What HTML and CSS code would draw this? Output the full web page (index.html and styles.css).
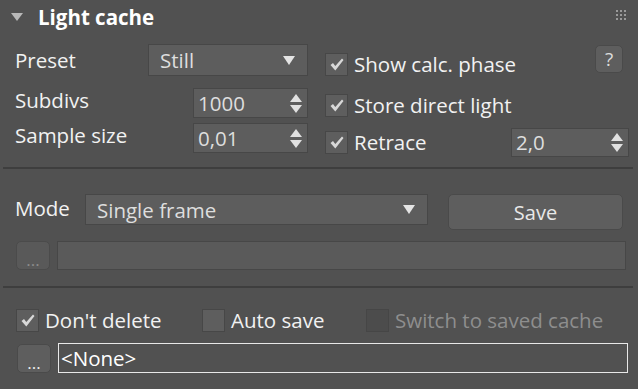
FILE: index.html
```html
<!doctype html>
<html lang="en">
  <head>
    <meta charset="UTF-8" />
    <title>Light cache</title>
    <link rel="stylesheet" href="styles.css">
  </head>
  <body>
    <div class="panel">
      <div class="header">
        <span class="collapse"></span>
        <span class="title">Light cache</span>
        <span class="grip">
          <i></i><i></i><i></i><i></i><i></i><i></i><i></i><i></i><i></i>
        </span>
      </div>

      <div class="top">
        <div class="left">
          <div class="row row-preset">
            <span class="label">Preset</span>
            <div class="dropdown preset-dd">
              <span>Still</span>
              <span class="arrow"></span>
            </div>
          </div>
          <div class="row row-subdivs">
            <span class="label">Subdivs</span>
            <div class="spinner">
              <span>1000</span>
              <span class="spin"><b class="up"></b><b class="down"></b></span>
            </div>
          </div>
          <div class="row row-sample">
            <span class="label">Sample size</span>
            <div class="spinner">
              <span>0,01</span>
              <span class="spin"><b class="up"></b><b class="down"></b></span>
            </div>
          </div>
        </div>

        <div class="right">
          <div class="row row-show">
            <label class="check"><span class="box on"></span>Show calc. phase</label>
            <button class="help">?</button>
          </div>
          <div class="row row-store">
            <label class="check"><span class="box on"></span>Store direct light</label>
          </div>
          <div class="row row-retrace">
            <label class="check"><span class="box on"></span>Retrace</label>
            <div class="spinner retrace-spin">
              <span>2,0</span>
              <span class="spin"><b class="up"></b><b class="down"></b></span>
            </div>
          </div>
        </div>
      </div>

      <div class="sep"></div>

      <div class="mode">
        <div class="row row-mode">
          <span class="label">Mode</span>
          <div class="dropdown mode-dd">
            <span>Single frame</span>
            <span class="arrow"></span>
          </div>
          <button class="save">Save</button>
        </div>
        <div class="row row-path">
          <button class="dots disabled">...</button>
          <div class="field"></div>
        </div>
      </div>

      <div class="sep"></div>

      <div class="bottom">
        <div class="row row-opts">
          <label class="check dont"><span class="box on"></span>Don't delete</label>
          <label class="check auto"><span class="box"></span>Auto save</label>
          <label class="check switch disabled"><span class="box"></span>Switch to saved cache</label>
        </div>
        <div class="row row-file">
          <button class="dots">...</button>
          <div class="field file">&lt;None&gt;</div>
        </div>
      </div>
    </div>
  </body>
</html>
```

FILE: styles.css
```css
* {
  margin: 0;
  padding: 0;
  box-sizing: border-box;
}

body {
  background: #515151;
  font-family: 'Open Sans', 'Noto Sans', sans-serif;
  font-size: 20.5px;
  color: #f2f2f2;
  width: 638px;
  height: 389px;
  overflow: hidden;
}

.panel {
  width: 638px;
}

.row {
  display: flex;
  align-items: center;
}

/* header */
.header {
  height: 34px;
  display: flex;
  align-items: center;
  position: relative;
}

.collapse {
  width: 0;
  height: 0;
  margin-left: 11px;
  border-left: 6px solid transparent;
  border-right: 6px solid transparent;
  border-top: 8px solid #b8b8b8;
}

.title {
  margin-left: 15px;
  font-weight: 700;
  font-size: 20.5px;
  color: #ffffff;
}

.grip {
  position: absolute;
  right: 12px;
  top: 10px;
  display: grid;
  grid-template-columns: repeat(3, 2px);
  gap: 2px;
}

.grip i {
  width: 2px;
  height: 2px;
  background: #9a9a9a;
}

/* shared controls */
.dropdown,
.spinner,
.field {
  background: #5d5d5d;
  border: 1px solid #474747;
  display: flex;
  align-items: center;
  color: #dedede;
}

.dropdown {
  justify-content: space-between;
  padding: 0 12px 0 11px;
}

.arrow {
  width: 0;
  height: 0;
  border-left: 6px solid transparent;
  border-right: 6px solid transparent;
  border-top: 9px solid #e4e4e4;
}

.spinner {
  justify-content: space-between;
  padding: 0 5px 0 4px;
  height: 30px;
}

.spin {
  display: flex;
  flex-direction: column;
  gap: 3px;
}

.spin b {
  width: 0;
  height: 0;
  border-left: 6px solid transparent;
  border-right: 6px solid transparent;
}

.spin .up {
  border-bottom: 8px solid #e0e0e0;
}

.spin .down {
  border-top: 8px solid #e0e0e0;
}

.check {
  display: flex;
  align-items: center;
  gap: 6px;
}

.box {
  width: 23px;
  height: 23px;
  background: #5e5e5e;
  border: 1px solid #474747;
  position: relative;
}

.box.on::after {
  content: '';
  position: absolute;
  left: 4px;
  top: 4px;
  width: 14px;
  height: 13px;
  background: no-repeat center / contain
    url("data:image/svg+xml,%3Csvg xmlns='http://www.w3.org/2000/svg' viewBox='0 0 14 13'%3E%3Cpath d='M0.5 7 L3 5 L5.3 8 L12 0.5 L13.5 2 L5.3 12.5 Z' fill='%23d8d8d8'/%3E%3C/svg%3E");
}

button {
  font-family: inherit;
  font-size: 20px;
  color: #f0f0f0;
  background: #5e5e5e;
  border: 1px solid #4a4a4a;
  border-radius: 5px;
}

/* top section */
.top {
  display: flex;
  height: 133px;
}

.left {
  width: 308px;
  padding-left: 15px;
}

.label {
  flex: 1;
}

.row-preset {
  margin-top: 10px;
  height: 32px;
}

.preset-dd {
  width: 160px;
  height: 32px;
}

.row-subdivs {
  margin-top: 12px;
  height: 30px;
}

.row-subdivs .label,
.row-sample .label {
  margin-top: -6px;
}

.row-sample {
  margin-top: 5px;
  height: 30px;
}

.row-subdivs .spinner,
.row-sample .spinner {
  width: 115px;
}

.right {
  width: 330px;
  padding-left: 17px;
}

.row-show {
  margin-top: 11px;
  height: 33px;
  justify-content: space-between;
  align-items: flex-end;
  padding-right: 15px;
}

.help {
  width: 28px;
  height: 28px;
  align-self: flex-start;
  color: #dcdcdc;
  font-size: 19px;
  line-height: 1;
}

.row-store {
  margin-top: 16px;
  height: 22px;
}

.row-retrace {
  margin-top: 11px;
  height: 30px;
  justify-content: space-between;
  padding-right: 9px;
}

.retrace-spin {
  width: 118px;
  height: 29px;
}

.sep {
  height: 2px;
  margin: 0 5px 0 3px;
  background: #3e3e3e;
}

/* mode section */
.mode {
  height: 117px;
  padding: 25px 0 0 15px;
}

.row-mode {
  height: 36px;
  align-items: flex-start;
}

.row-mode .label {
  flex: none;
  width: 70px;
  margin-top: 0;
}

.mode-dd {
  width: 343px;
  height: 31px;
}

.save {
  margin-left: 20px;
  width: 175px;
  height: 36px;
  color: #e8e8e8;
}

.row-path {
  margin-top: 11px;
  gap: 7px;
}

.dots {
  width: 34px;
  height: 29px;
  margin-left: 1px;
  font-size: 17px;
  line-height: 1;
  padding-top: 8px;
}

.dots.disabled {
  color: #8c8c8c;
  background: #595959;
  border-color: #4b4b4b;
}

.field {
  width: 569px;
  height: 29px;
  background: #5a5a5a;
}

/* bottom section */
.bottom {
  padding: 20px 0 0 16px;
}

.row-opts {
  height: 24px;
}

.dont {
  width: 186px;
}

.auto {
  width: 164px;
}

.switch.disabled {
  color: #8e8e8e;
}

.switch .box {
  background: #4c4c4c;
  border-color: #464646;
}

.row-file {
  margin-top: 11px;
  gap: 7px;
}

.field.file {
  height: 30px;
  width: 570px;
  background: #515151;
  border: 1px solid #e8e8e8;
  padding-left: 2px;
  color: #ffffff;
}
```
